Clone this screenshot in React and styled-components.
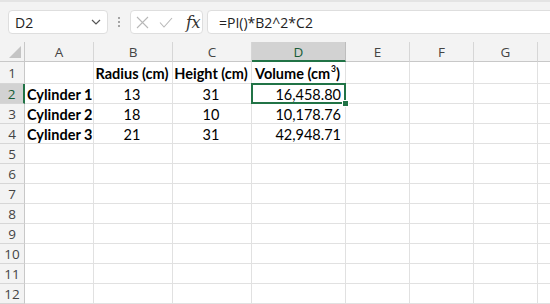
import React from "react";
import styled, { createGlobalStyle } from "styled-components";

const GlobalStyle = createGlobalStyle`
  html, body { margin: 0; padding: 0; background: #ffffff; }
  body { font-family: Lato, "Liberation Sans", sans-serif; }
  * { box-sizing: border-box; }
`;

const Page = styled.div`
  width: 550px;
  height: 304px;
  overflow: hidden;
  background: #ffffff;
`;

const FormulaBar = styled.div`
  height: 42px;
  display: flex;
  align-items: flex-start;
  padding: 8px 0 0 8px;
  background: #f3f3f3;
  border-top: 2px solid #e4e4e4;
`;

const Box = styled.div`
  height: 24px;
  background: #ffffff;
  border: 1px solid #dedede;
  border-radius: 4px;
  display: flex;
  align-items: center;
`;

const NameBox = styled(Box)`
  width: 100px;
  padding: 0 6px 0 6px;
  justify-content: space-between;
  font-family: "Open Sans", "Noto Sans", sans-serif;
  font-size: 14px;
  color: #222;
`;

const DotsWrap = styled.div`
  width: 22px;
  height: 24px;
  display: flex;
  flex-direction: column;
  align-items: center;
  justify-content: center;
  gap: 2px;
`;

const Dot = styled.span`
  width: 2px;
  height: 2px;
  border-radius: 1px;
  background: #8a8a8a;
`;

const FxBox = styled(Box)`
  width: 73px;
  padding: 0 0 0 5px;
  gap: 10px;
`;

const FxText = styled.span`
  font-family: "DejaVu Serif", "Liberation Serif", serif;
  font-style: italic;
  font-size: 16px;
  color: #333;
  margin-left: 3px;
  letter-spacing: -0.5px;
`;

const FormulaInput = styled(Box)`
  flex: 1;
  margin-left: 4px;
  margin-right: -10px;
  padding-left: 11px;
  font-family: "Open Sans", "Noto Sans", sans-serif;
  font-size: 14px;
  color: #222;
`;

const Sheet = styled.div`
  display: flex;
  flex-direction: column;
`;

const Row = styled.div`
  display: flex;
  height: ${(p) => p.$h || 20}px;
`;

const HeaderBase = styled.div`
  flex: none;
  height: 100%;
  background: #f3f3f3;
  color: #444;
  font-family: "Open Sans", "Noto Sans", sans-serif;
  font-size: 13.5px;
  display: flex;
  align-items: center;
  justify-content: center;
`;

const Corner = styled(HeaderBase)`
  width: 25px;
  border-right: 1px solid #c8c8c8;
  border-bottom: 1px solid #c8c8c8;
  align-items: flex-end;
  justify-content: flex-end;
  padding: 0 3px 3px 0;
`;

const ColHeader = styled(HeaderBase)`
  width: ${(p) => p.$w}px;
  border-right: 1px solid ${(p) => (p.$active ? "#bdbdbd" : "#d6d6d6")};
  background: ${(p) => (p.$active ? "#d2d2d2" : "#f3f3f3")};
  color: ${(p) => (p.$active ? "#185c37" : "#444")};
  border-bottom: ${(p) => (p.$active ? "2px solid #217346" : "1px solid #c8c8c8")};
  padding-top: ${(p) => (p.$active ? "1px" : "0")};
`;

const RowHeader = styled(HeaderBase)`
  width: 25px;
  border-bottom: 1px solid #d6d6d6;
  border-right: ${(p) => (p.$active ? "2px solid #217346" : "1px solid #c8c8c8")};
  background: ${(p) => (p.$active ? "#d2d2d2" : "#f3f3f3")};
  color: ${(p) => (p.$active ? "#185c37" : "#444")};
  padding-top: 1px;
`;

const Cell = styled.div`
  position: relative;
  z-index: ${(p) => (p.$sel ? 2 : "auto")};
  flex: none;
  width: ${(p) => p.$w}px;
  height: 100%;
  border-right: 1px solid #e1e1e1;
  border-bottom: 1px solid #e1e1e1;
  display: flex;
  align-items: center;
  justify-content: ${(p) =>
    p.$align === "right" ? "flex-end" : p.$align === "center" ? "center" : "flex-start"};
  padding: 1px 4px 0 2px;
  font-size: 14.5px;
  font-weight: ${(p) => (p.$bold ? 700 : 400)};
  color: #000;
  white-space: nowrap;
`;

const CellText = styled.span`
  display: inline-block;
`;

const Selection = styled.div`
  position: absolute;
  left: -1px;
  top: -1px;
  right: -1px;
  bottom: -1px;
  border: 2px solid #217346;
  pointer-events: none;
`;

const FillHandle = styled.div`
  position: absolute;
  right: -5px;
  bottom: -5px;
  width: 7px;
  height: 7px;
  background: #217346;
  border: 1px solid #ffffff;
`;

const Sup = styled.sup`
  font-size: 8.5px;
  line-height: 0;
  vertical-align: 7px;
  margin-left: 1px;
`;

const widths = [69, 79, 79, 94, 64, 64, 64, 40];
const letters = ["A", "B", "C", "D", "E", "F", "G", ""];

const data = {
  1: [
    { t: "" },
    { t: "Radius (cm)", b: true, a: "center" },
    { t: "Height (cm)", b: true, a: "center" },
    {
      t: (
        <>
          Volume (cm<Sup>3</Sup>)
        </>
      ),
      b: true,
      a: "center",
    },
  ],
  2: [
    { t: "Cylinder 1", b: true },
    { t: "13", a: "center" },
    { t: "31", a: "center" },
    { t: "16,458.80", a: "right", sel: true },
  ],
  3: [
    { t: "Cylinder 2", b: true },
    { t: "18", a: "center" },
    { t: "10", a: "center" },
    { t: "10,178.76", a: "right" },
  ],
  4: [
    { t: "Cylinder 3", b: true },
    { t: "21", a: "center" },
    { t: "31", a: "center" },
    { t: "42,948.71", a: "right" },
  ],
};

const Chevron = () => (
  <svg width="10" height="6" viewBox="0 0 10 6">
    <polyline points="1,1 5,5 9,1" fill="none" stroke="#555" strokeWidth="1.2" />
  </svg>
);

const CrossIcon = () => (
  <svg width="13" height="13" viewBox="0 0 13 13">
    <path d="M1 1 L12 12 M12 1 L1 12" stroke="#b8b8b8" strokeWidth="1.1" fill="none" />
  </svg>
);

const CheckIcon = () => (
  <svg width="14" height="11" viewBox="0 0 14 11">
    <polyline points="1,5.5 5,10 13,1" fill="none" stroke="#b8b8b8" strokeWidth="1.1" />
  </svg>
);

const CornerTriangle = () => (
  <svg width="12" height="12" viewBox="0 0 12 12">
    <polygon points="12,0 12,12 0,12" fill="#c4c4c4" />
  </svg>
);

export default function App() {
  const rows = Array.from({ length: 12 }, (_, i) => i + 1);
  return (
    <>
      <GlobalStyle />
      <Page>
        <FormulaBar>
          <NameBox>
            <span>D2</span>
            <Chevron />
          </NameBox>
          <DotsWrap>
            <Dot />
            <Dot />
            <Dot />
          </DotsWrap>
          <FxBox>
            <CrossIcon />
            <CheckIcon />
            <FxText>fx</FxText>
          </FxBox>
          <FormulaInput>=PI()*B2^2*C2</FormulaInput>
        </FormulaBar>
        <Sheet>
          <Row $h={20}>
            <Corner>
              <CornerTriangle />
            </Corner>
            {letters.map((l, i) => (
              <ColHeader key={i} $w={widths[i]} $active={l === "D"}>
                {l}
              </ColHeader>
            ))}
          </Row>
          {rows.map((r) => (
            <Row key={r} $h={r === 1 ? 22 : 20}>
              <RowHeader $active={r === 2}>{r}</RowHeader>
              {widths.map((w, ci) => {
                const c = data[r] && data[r][ci];
                return (
                  <Cell key={ci} $w={w} $align={c && c.a} $bold={c && c.b} $sel={c && c.sel}>
                    {c && c.t ? <CellText>{c.t}</CellText> : null}
                    {c && c.sel ? (
                      <Selection>
                        <FillHandle />
                      </Selection>
                    ) : null}
                  </Cell>
                );
              })}
            </Row>
          ))}
        </Sheet>
      </Page>
    </>
  );
}
